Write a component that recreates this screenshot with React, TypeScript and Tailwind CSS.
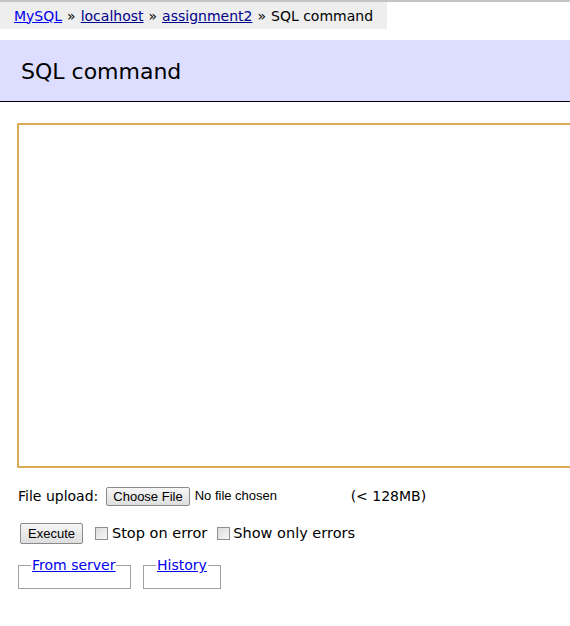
export default function App() {
  const verdana = { fontFamily: '"DejaVu Sans", Verdana, sans-serif' };
  const arial = { fontFamily: '"Liberation Sans", Arial, sans-serif' };

  return (
    <div className="min-h-[626px] w-[570px] overflow-hidden bg-white text-black" style={verdana}>
      <div className="h-[2px] bg-[#c4c4c4]" />

      {/* Breadcrumb */}
      <div className="inline-flex h-[27px] items-center bg-[#eeeeee] px-[14px] text-[14px] leading-none">
        <a href="#" className="text-[#0000ee] underline">MySQL</a>
        <span className="mx-[5px]">»</span>
        <a href="#" className="text-[#00008b] underline">localhost</a>
        <span className="mx-[5px]">»</span>
        <a href="#" className="text-[#00008b] underline">assignment2</a>
        <span className="mx-[5px]">»</span>
        <span>SQL command</span>
      </div>

      {/* Heading */}
      <div className="mt-[11px] flex h-[62px] items-center border-b border-black bg-[#ddddff] pl-[21px] pt-[2px]">
        <h2 className="text-[22px] font-normal leading-none">SQL command</h2>
      </div>

      <div className="pl-[17px]">
        {/* Query box */}
        <div className="mt-[21px] h-[345px] w-[600px] rounded-[1px] border-2 border-[#dcaa55] bg-white" />

        {/* File upload */}
        <div className="mt-[18px] flex h-[20px] items-center pl-[1px] text-[14px]">
          <span>File upload:</span>
          <button
            className="ml-[8px] h-[19px] rounded-[2px] border border-[#8a8a8a] bg-gradient-to-b from-[#f6f6f6] to-[#dedede] px-[6px] text-[13px] leading-none"
            style={arial}
          >
            Choose File
          </button>
          <span className="ml-[5px] w-[156px] text-[13px]" style={arial}>No file chosen</span>
          <span>(&lt; 128MB)</span>
        </div>

        {/* Execute row */}
        <div className="mt-[17px] flex h-[21px] items-center pl-[3px] text-[14.5px]">
          <button
            className="h-[21px] rounded-[2px] border border-[#8a8a8a] bg-gradient-to-b from-[#f6f6f6] to-[#dedede] px-[7px] text-[13px] leading-none"
            style={arial}
          >
            Execute
          </button>
          <span className="ml-[12px] inline-block h-[13px] w-[13px] border border-[#8f8f8f] bg-gradient-to-br from-[#dcdcdc] to-[#f8f8f8]" />
          <span className="ml-[4px]">Stop on error</span>
          <span className="ml-[10px] inline-block h-[13px] w-[13px] border border-[#8f8f8f] bg-gradient-to-br from-[#dcdcdc] to-[#f8f8f8]" />
          <span className="ml-[3px]">Show only errors</span>
        </div>

        {/* Fieldsets */}
        <div className="mt-[13px] flex gap-[12px] pl-[1px] text-[14px]">
          <fieldset className="h-[32px] w-[113px] border border-[#a0a0a0] px-[12px]">
            <legend className="px-[1px] leading-[16px]">
              <a href="#" className="text-[#0000ee] underline">From server</a>
            </legend>
          </fieldset>
          <fieldset className="h-[32px] w-[78px] border border-[#a0a0a0] px-[12px]">
            <legend className="px-[1px] leading-[16px]">
              <a href="#" className="text-[#0000ee] underline">History</a>
            </legend>
          </fieldset>
        </div>
      </div>
    </div>
  );
}
